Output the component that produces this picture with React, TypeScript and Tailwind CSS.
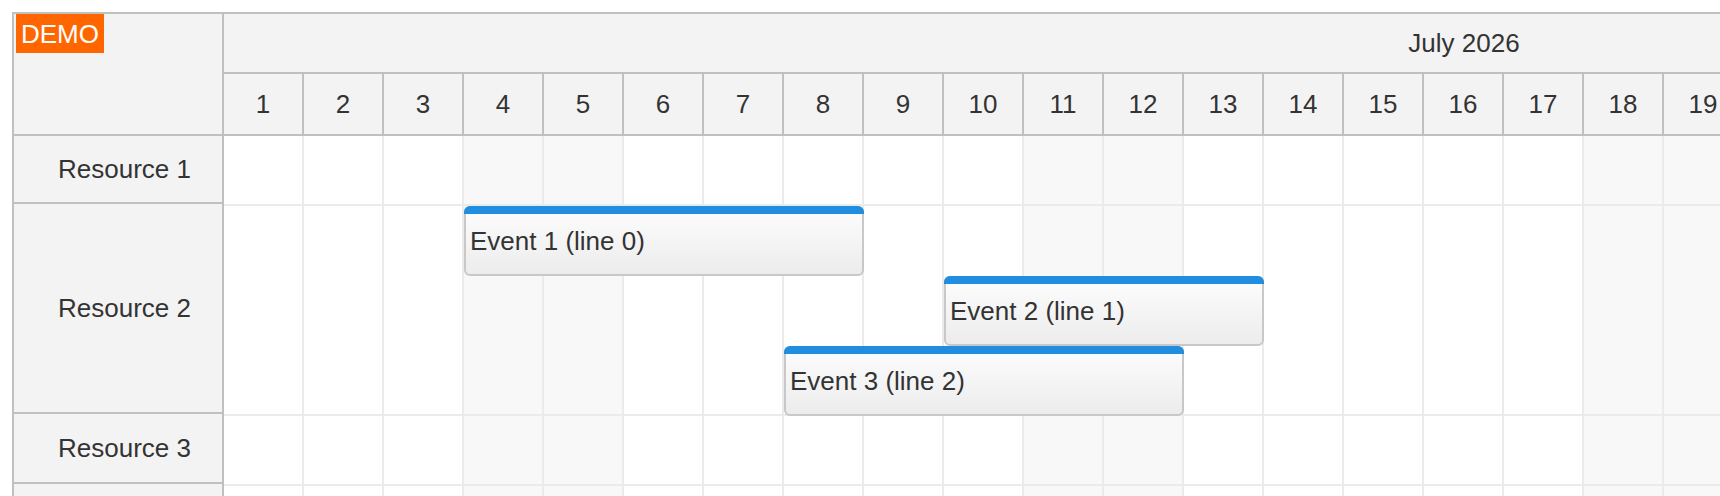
import React from "react";

type Resource = { name: string; headerHeight: number; rowHeight: number };
type SchedulerEvent = { text: string; start: number; days: number; line: number };

const DAYS = Array.from({ length: 31 }, (_, i) => i + 1);
// July 2026 starts on a Wednesday
const WEEKEND = new Set([4, 5, 11, 12, 18, 19, 25, 26]);

const CELL_W = 80;
const LINE_H = 70;

const resources: Resource[] = [
  { name: "Resource 1", headerHeight: 68, rowHeight: 70 },
  { name: "Resource 2", headerHeight: 210, rowHeight: 210 },
  { name: "Resource 3", headerHeight: 70, rowHeight: 70 },
  { name: "Resource 4", headerHeight: 70, rowHeight: 70 },
];

const events: Record<string, SchedulerEvent[]> = {
  "Resource 2": [
    { text: "Event 1 (line 0)", start: 4, days: 5, line: 0 },
    { text: "Event 2 (line 1)", start: 10, days: 4, line: 1 },
    { text: "Event 3 (line 2)", start: 8, days: 5, line: 2 },
  ],
};

function EventBox({ ev }: { ev: SchedulerEvent }) {
  return (
    <div
      className="absolute flex items-center rounded-[6px] border-2 border-[#c8c8c8] bg-linear-to-b from-[#fdfdfd] to-[#ececec] pl-[4px] whitespace-nowrap"
      style={{
        left: (ev.start - 1) * CELL_W,
        top: ev.line * LINE_H,
        width: ev.days * CELL_W,
        height: LINE_H,
      }}
    >
      <div className="absolute -top-[2px] -left-[2px] -right-[2px] h-[8px] rounded-t-[6px] bg-[#218de0]" />
      <span>{ev.text}</span>
    </div>
  );
}

export default function App() {
  return (
    <div className="w-[1720px] h-[496px] overflow-hidden bg-white pl-3 pt-3 font-['Liberation_Sans',Arial,sans-serif] text-[26px] text-[#333]">
      <div className="flex w-max border-l-2 border-t-2 border-[#c0c0c0]">
        {/* row headers */}
        <div className="w-[210px] shrink-0 bg-[#f3f3f3] border-r-2 border-[#c0c0c0]">
          <div className="h-[122px] border-b-2 border-[#c0c0c0] pl-[2px]">
            <div className="inline-flex h-[39px] items-center bg-[#ff6600] px-[5px] text-[26px] leading-none text-white">
              DEMO
            </div>
          </div>
          {resources.map((r) => (
            <div
              key={r.name}
              className="flex items-center border-b-2 border-[#c0c0c0] pl-[44px]"
              style={{ height: r.headerHeight }}
            >
              {r.name}
            </div>
          ))}
        </div>

        {/* time header + grid */}
        <div className="flex flex-col">
          <div className="flex h-[60px] items-center justify-center border-b-2 border-[#c0c0c0] bg-[#f3f3f3]">
            July 2026
          </div>
          <div className="flex h-[62px] border-b-2 border-[#c0c0c0] bg-[#f3f3f3]">
            {DAYS.map((d) => (
              <div
                key={d}
                className="flex w-[80px] items-center justify-center border-r-2 border-[#c0c0c0]"
              >
                {d}
              </div>
            ))}
          </div>

          {resources.map((r) => (
            <div key={r.name} className="relative flex" style={{ height: r.rowHeight }}>
              {DAYS.map((d) => (
                <div
                  key={d}
                  className={
                    WEEKEND.has(d)
                      ? "w-[80px] border-r-2 border-b-2 border-[#ebebeb] bg-[#f8f8f8]"
                      : "w-[80px] border-r-2 border-b-2 border-[#ebebeb] bg-white"
                  }
                />
              ))}
              {(events[r.name] || []).map((ev) => (
                <EventBox key={ev.text} ev={ev} />
              ))}
            </div>
          ))}
        </div>
      </div>
    </div>
  );
}
